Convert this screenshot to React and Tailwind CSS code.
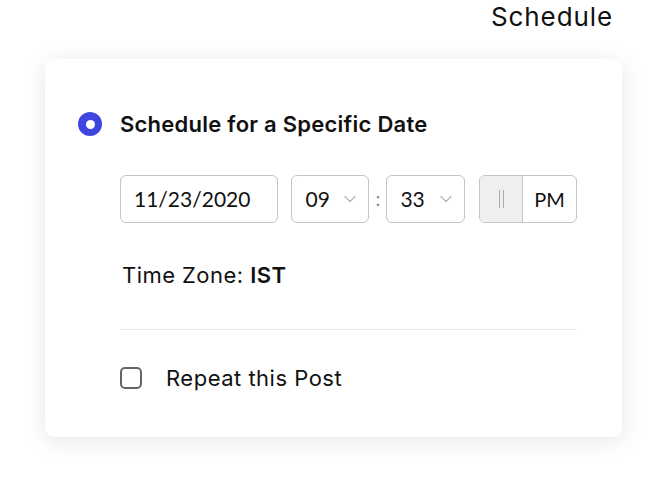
import React from "react";

function Chevron() {
  return (
    <svg width="12" height="8" viewBox="0 0 12 8" fill="none" className="shrink-0">
      <path d="M1 1.5 L6 6.5 L11 1.5" stroke="#b5b5b5" strokeWidth="1.3" strokeLinecap="round" strokeLinejoin="round" />
    </svg>
  );
}

export default function App() {
  return (
    <div className="w-[667px] h-[493px] bg-white overflow-hidden" style={{ fontFamily: "Inter, 'Noto Sans', sans-serif" }}>
      <div className="flex justify-end pr-[54px] h-[59px]">
        <span className="text-[26px] leading-[34px] text-[#111] tracking-[0.9px]">Schedule</span>
      </div>
      <div className="ml-[45px] w-[577px] h-[378px] bg-white rounded-[9px] shadow-[0_4px_24px_rgba(0,0,0,0.10)] pl-[33px] pr-[45px] pt-[52px]">
        <div className="flex items-center h-[26px]">
          <div className="w-[24px] h-[24px] rounded-full bg-[#3f46e0] flex items-center justify-center">
            <div className="w-[9px] h-[9px] rounded-full bg-white" />
          </div>
          <span className="ml-[18px] text-[22px] font-semibold text-[#111] tracking-[0.25px]">Schedule for a Specific Date</span>
        </div>
        <div className="ml-[42px] mt-[38px] flex items-center" style={{ fontFamily: "Lato, sans-serif" }}>
          <div className="w-[158px] h-[48px] border border-[#c4c4c4] rounded-[6px] flex items-center pl-[13px] text-[21px] text-[#111]">11/23/2020</div>
          <div className="ml-[13px] w-[79px] h-[48px] border border-[#c4c4c4] rounded-[6px] flex items-center justify-between pl-[14px] pr-[12px] text-[21px] text-[#111]">
            <span>09</span>
            <Chevron />
          </div>
          <div className="w-[17px] text-center text-[20px] text-[#888] leading-none pb-[2px]">:</div>
          <div className="w-[79px] h-[48px] border border-[#c4c4c4] rounded-[6px] flex items-center justify-between pl-[13px] pr-[12px] text-[21px] text-[#111]">
            <span>33</span>
            <Chevron />
          </div>
          <div className="ml-[14px] w-[98px] h-[48px] border border-[#c4c4c4] rounded-[6px] flex overflow-hidden">
            <div className="w-[43px] h-full bg-[#efefef] border-r border-[#c4c4c4] flex items-center justify-center gap-[3px]">
              <div className="w-[1px] h-[18px] bg-[#aaa]" />
              <div className="w-[1px] h-[18px] bg-[#aaa]" />
            </div>
            <div className="flex-1 flex items-center justify-center text-[20px] text-[#111]">PM</div>
          </div>
        </div>
        <div className="ml-[44px] mt-[37px] text-[22px] text-[#111] leading-[30px] tracking-[0.45px]">
          Time Zone: <span className="font-semibold">IST</span>
        </div>
        <div className="ml-[42px] mt-[39px] h-[1px] bg-[#e6e6e6]" />
        <div className="ml-[42px] mt-[36px] flex items-center h-[24px]">
          <div className="w-[22px] h-[22px] rounded-[5px] border-2 border-[#666]" />
          <span className="ml-[24px] text-[22px] text-[#111] tracking-[0.5px]">Repeat this Post</span>
        </div>
      </div>
    </div>
  );
}
